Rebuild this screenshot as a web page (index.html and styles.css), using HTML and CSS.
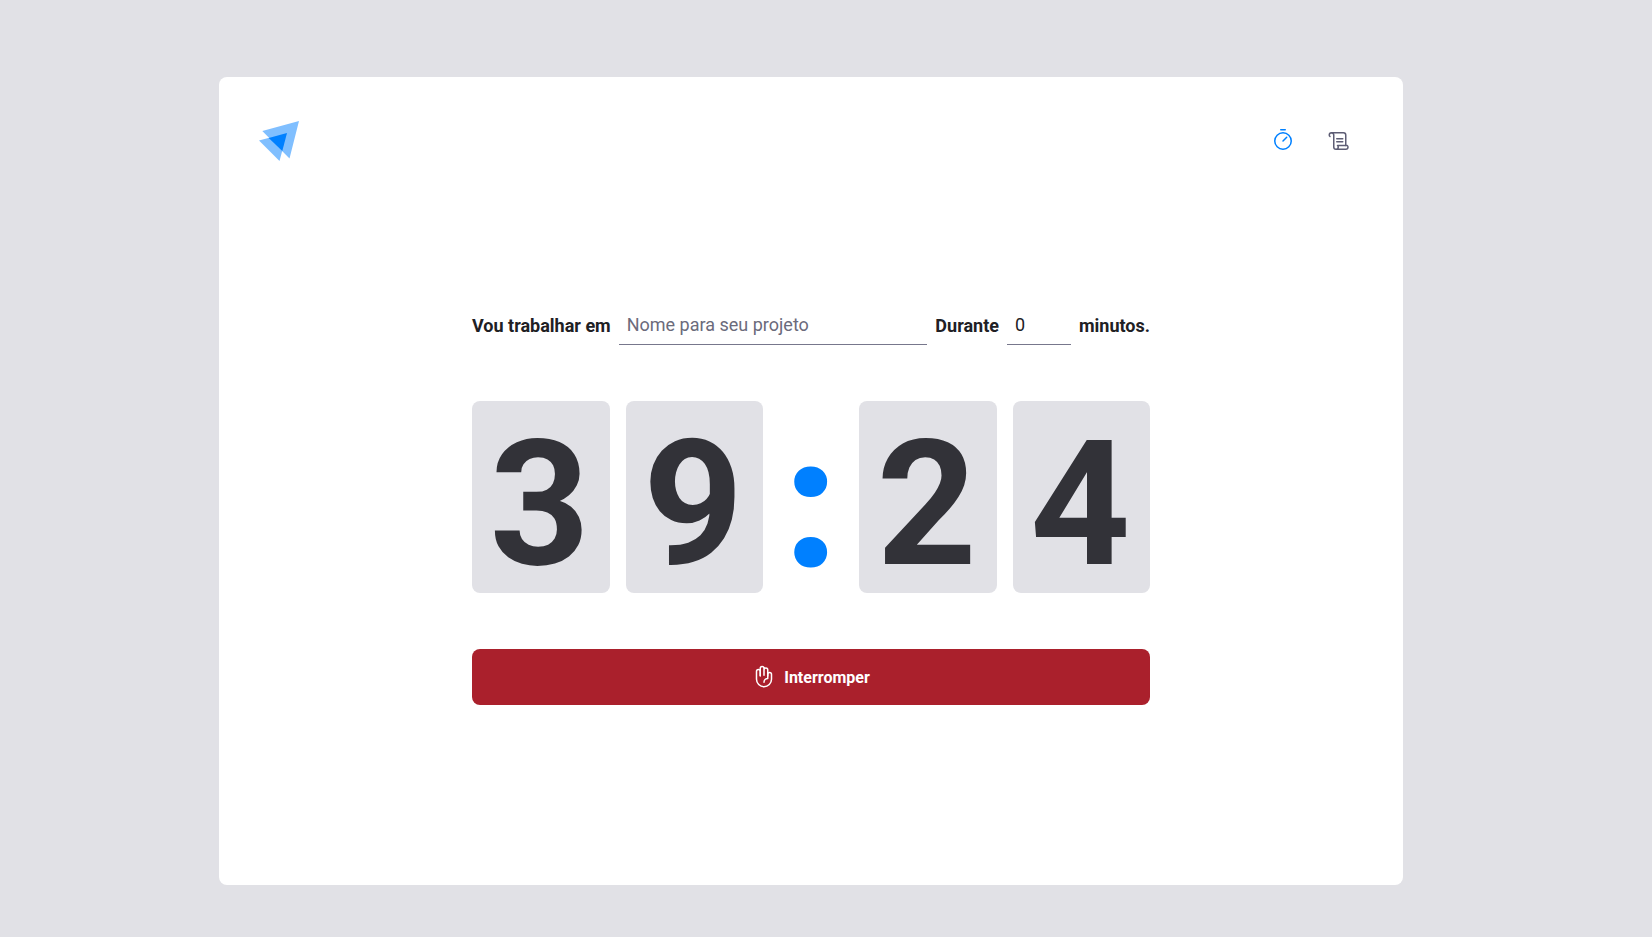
FILE: index.html
```html
<!DOCTYPE html>
<html lang="pt-BR">
<head>
  <meta charset="utf-8">
  <meta name="viewport" content="width=device-width, initial-scale=1">
  <title>Ignite Timer</title>
  <link rel="stylesheet" href="styles.css">
</head>
<body>
  <div class="layout">
    <header class="header">
      <svg class="logo" viewBox="0 0 40 40" aria-hidden="true">
        <path class="logo-light" d="M3.300 10 40 0 30.500 37.500ZM0 19.500 28 12 20.500 40Z"/>
        <path class="logo-dark" d="M9.700 16.900 28 12 23.300 29.900Z"/>
      </svg>
      <nav class="nav">
        <a class="nav-link active" href="#" title="Timer" aria-label="Timer">
          <svg class="icon" viewBox="0 0 256 256" aria-hidden="true">
            <circle cx="128" cy="128" r="88"/>
            <path d="M128 128 167.600 88.400M104 8H152"/>
          </svg>
        </a>
        <a class="nav-link" href="#" title="Histórico" aria-label="Histórico">
          <svg class="icon" viewBox="0 0 256 256" aria-hidden="true">
            <path d="M104 104H168M104 136H168"/>
            <path d="M32 80s-8-6-8-16a24 24 0 0 1 48 0V192a24 24 0 0 0 48 0c0-10-8-16-8-16H216s8 6 8 16a24 24 0 0 1-24 24H96"/>
            <path d="M48 40H176a24 24 0 0 1 24 24V176"/>
          </svg>
        </a>
      </nav>
    </header>
    <main class="home">
      <form class="cycle">
        <div class="fields">
          <label for="task">Vou trabalhar em</label>
          <input class="field task" id="task" type="text" placeholder="Nome para seu projeto">
          <label for="minutes">Durante</label>
          <input class="field minutes" id="minutes" type="text" inputmode="numeric" value="0">
          <span>minutos.</span>
        </div>
        <div class="countdown">
          <span class="digit">3</span>
          <span class="digit">9</span>
          <span class="separator">:</span>
          <span class="digit">2</span>
          <span class="digit">4</span>
        </div>
        <button class="stop" type="button">
          <svg class="icon" viewBox="0 0 256 256" aria-hidden="true">
            <path d="M88 116V68a20 20 0 0 0-40 0v84a80 80 0 0 0 160 0V100a20 20 0 0 0-40 0v16"/>
            <path d="M88 112V36a20 20 0 0 1 40 0v72M128 52a20 20 0 0 1 40 0v92a40 40 0 0 0-40 40"/>
          </svg>
          Interromper
        </button>
      </form>
    </main>
  </div>
</body>
</html>
```
FILE: styles.css
```css
* {
  box-sizing: border-box;
  margin: 0;
  padding: 0;
}

body {
  display: flex;
  min-height: 100vh;
  padding: 77px 30px 52px 0;
  background: #e1e1e6;
  color: #202024;
  font-family: Roboto, sans-serif;
}

.layout {
  display: flex;
  flex-direction: column;
  width: 100%;
  max-width: 1184px;
  margin: 0 auto;
  padding: 40px;
  border-radius: 8px;
  background: #fff;
}

.header {
  display: flex;
  align-items: center;
  justify-content: space-between;
}

.logo {
  width: 40px;
  height: 40px;
}

.logo-light {
  fill: #80bfff;
}

.logo-dark {
  fill: #0080ff;
}

.nav {
  display: flex;
  gap: 8px;
}

.nav-link {
  display: flex;
  align-items: center;
  justify-content: center;
  width: 48px;
  height: 48px;
  color: #5d5d74;
}

.nav-link.active {
  color: #0080ff;
}

.icon {
  width: 24px;
  height: 24px;
  overflow: visible;
  fill: none;
  stroke: currentColor;
  stroke-width: 16;
  stroke-linecap: round;
  stroke-linejoin: round;
}

.home {
  display: flex;
  flex: 1;
  flex-direction: column;
  align-items: center;
  justify-content: center;
}

.cycle {
  display: flex;
  flex-direction: column;
  gap: 56px;
  width: 100%;
  max-width: 678px;
}

.fields {
  display: flex;
  align-items: center;
  gap: 8px;
  font-size: 18px;
  font-weight: 700;
}

.field {
  height: 40px;
  padding: 0 8px 1px;
  border: 0;
  border-bottom: 1px solid #77778c;
  outline: 0;
  background: transparent;
  color: #202024;
  font-family: inherit;
  font-size: 18px;
  font-weight: 400;
}

.field::placeholder {
  color: #6b6b7b;
  opacity: 1;
}

.task {
  flex: 1;
  min-width: 0;
}

.minutes {
  width: 64px;
}

.countdown {
  display: flex;
  gap: 16px;
  color: #323238;
  font-size: 175px;
  font-weight: 700;
  line-height: 128px;
}

.digit {
  flex: 1;
  padding: 40px 2px 24px 0;
  border-radius: 8px;
  background: #e1e1e6;
  text-align: center;
}

.separator {
  display: flex;
  justify-content: center;
  width: 64px;
  padding: 40px 0 24px;
  color: #0080ff;
  -webkit-text-stroke: 5px #0080ff;
}

.stop {
  display: flex;
  align-items: center;
  justify-content: center;
  gap: 8px;
  height: 56px;
  border: 0;
  border-radius: 8px;
  background: #aa202c;
  color: #fff;
  font-family: inherit;
  font-size: 16px;
  font-weight: 700;
  cursor: pointer;
}
```
